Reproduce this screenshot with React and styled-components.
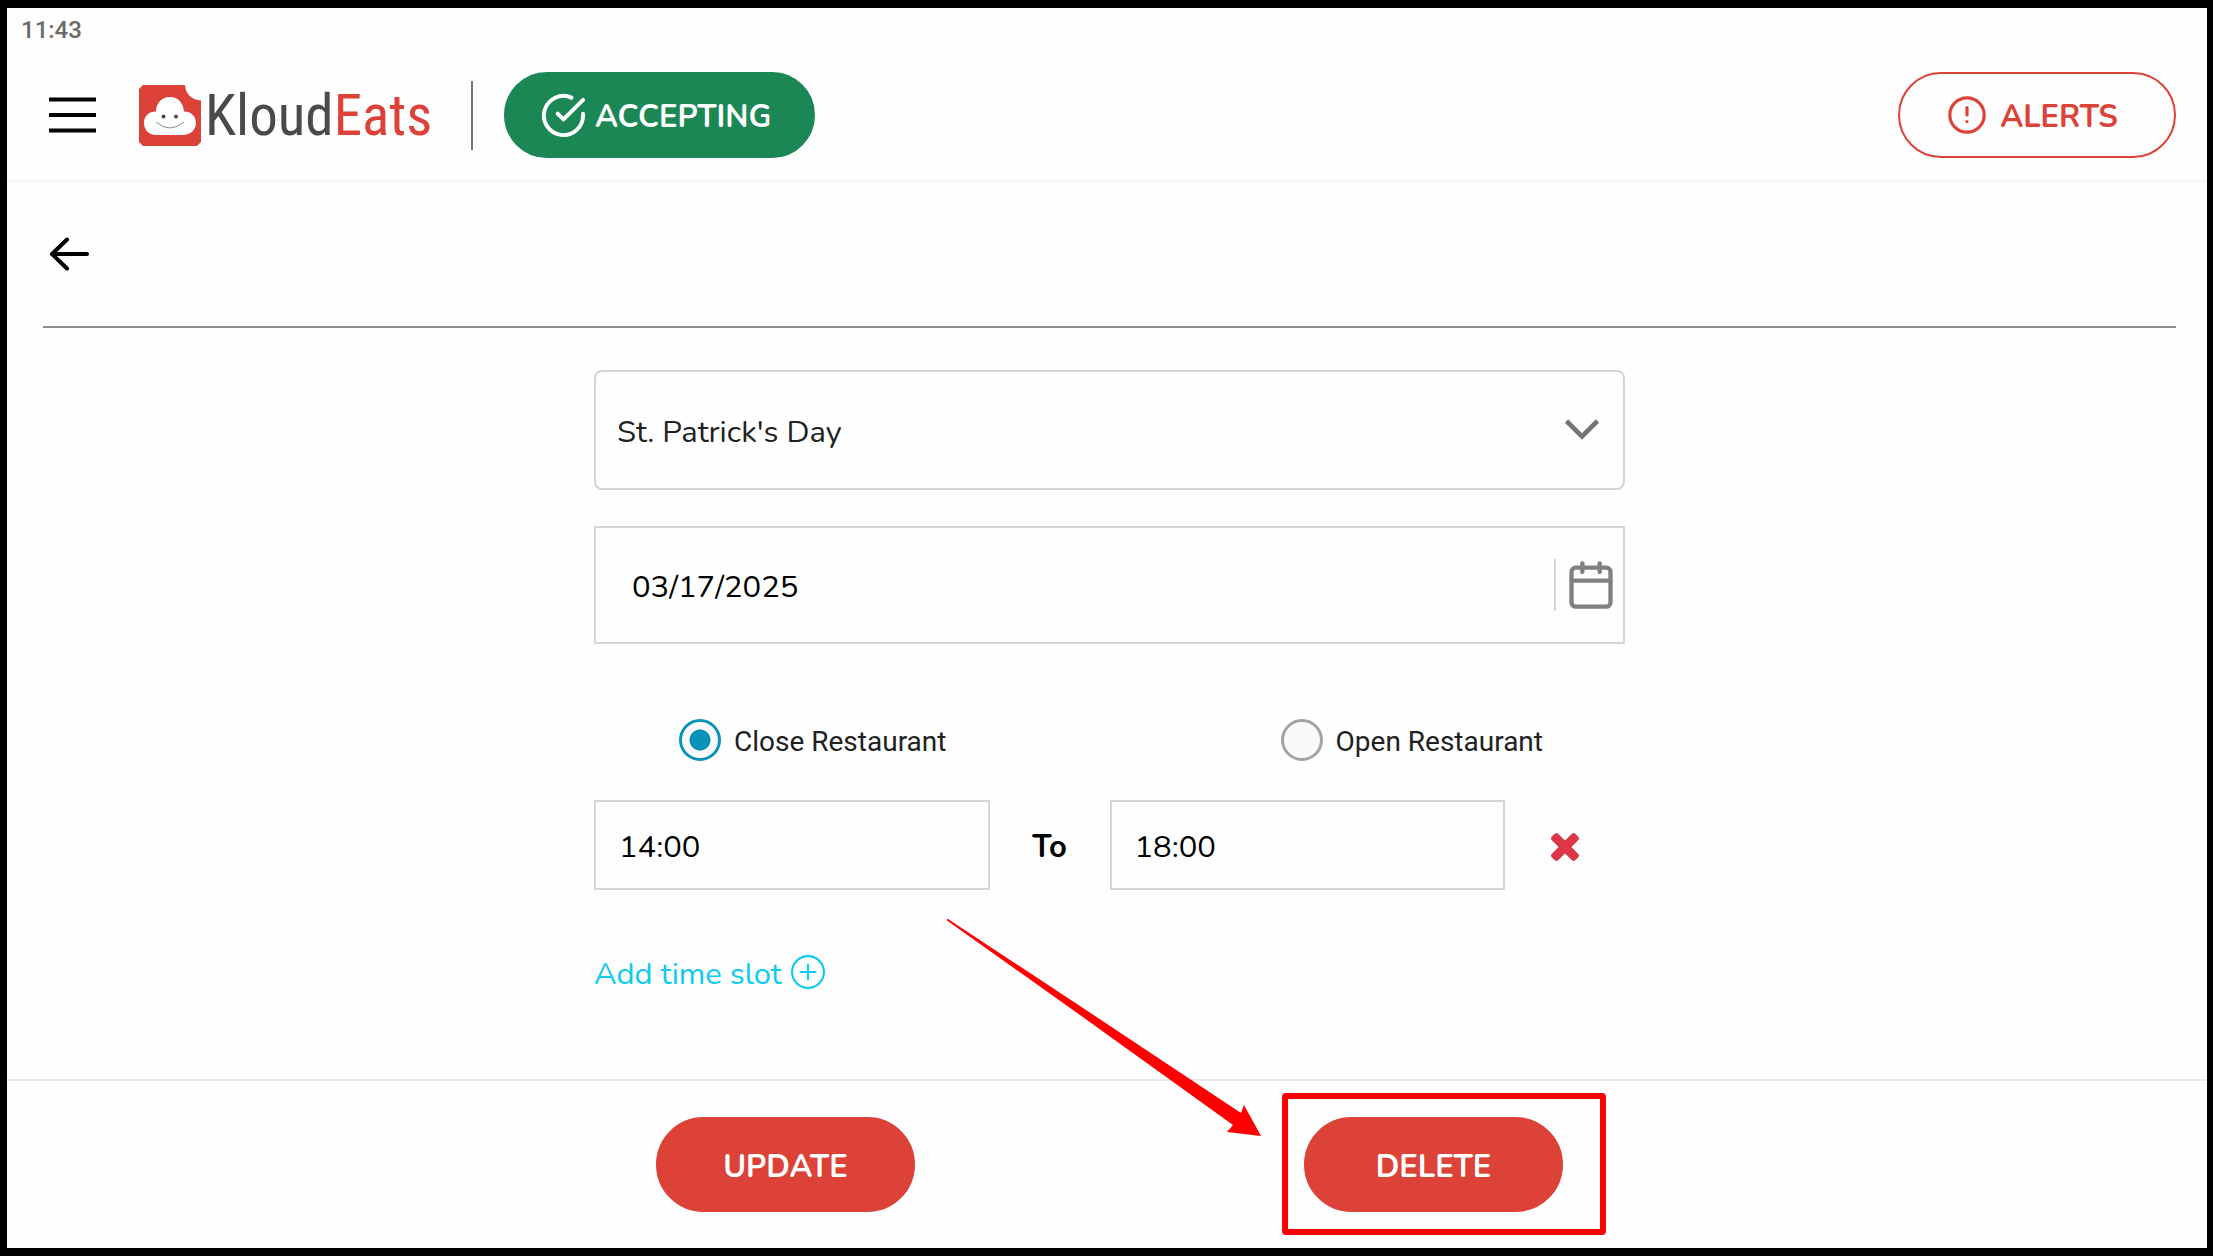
import React, { useState } from "react";
import styled, { createGlobalStyle } from "styled-components";
import { BsPlusCircle } from "react-icons/bs";
import { Calendar } from "lucide-react";

const colors = {
  page: "#fefefe",
  red: "#dc4238",
  green: "#1a8754",
  cyan: "#0dcaf0",
  danger: "#dc3545",
  radio: "#0a92b7",
  border: "#d4d4d4",
  gray: "#808080",
  marker: "#ff0000",
};

const GlobalStyle = createGlobalStyle`
  * {
    box-sizing: border-box;
  }

  body {
    margin: 0;
    background: #000;
    font-family: Nunito, Lato, "Open Sans", sans-serif;
    font-size: 31px;
    color: #000;
  }

  button, input, select {
    font: inherit;
    color: inherit;
    margin: 0;
  }
`;

// Device frame around the whole screen
const Screen = styled.div`
  min-height: 100vh;
  display: flex;
  flex-direction: column;
  border: solid #000;
  border-width: 8px 6px 8px 7px;
  background: ${colors.page};
`;

const StatusBar = styled.div`
  height: 44px;
  padding: 0 14px;
  display: flex;
  align-items: center;
  font-family: Roboto, sans-serif;
  font-size: 24px;
  font-weight: 500;
  color: #6a6a6a;
`;

const Header = styled.header`
  display: flex;
  align-items: center;
  padding: 20px 31px 22px 42px;
  border-bottom: 2px solid #f5f5f5;
`;

const IconButton = styled.button`
  display: flex;
  align-items: center;
  justify-content: center;
  padding: 0;
  border: none;
  background: none;
  cursor: pointer;
`;

const Logo = styled.a`
  display: flex;
  align-items: center;
  gap: 4px;
  margin-left: 43px;
  font-family: "Roboto Condensed", "Liberation Sans Narrow", Roboto, sans-serif;
  font-size: 57px;
  line-height: 64px;
  color: #4a4a4a;
  text-decoration: none;

  span {
    padding-top: 2px;
  }

  strong {
    font-weight: inherit;
    color: ${colors.red};
  }
`;

const Divider = styled.span`
  width: 2px;
  height: 69px;
  margin: 0 31px 0 39px;
  background: #6c757d;
`;

const Pill = styled.button`
  display: flex;
  align-items: center;
  justify-content: center;
  gap: ${(props) => props.$gap || "0"};
  width: ${(props) => props.$width};
  height: ${(props) => props.$height || "86px"};
  padding: 0 ${(props) => (props.$gap ? "8px" : "0")} 0 0;
  border: 2px solid ${(props) => props.$color};
  border-radius: 48px;
  background: ${(props) => (props.$outline ? "transparent" : props.$color)};
  color: ${(props) => (props.$outline ? props.$color : "#fff")};
  font-weight: 700;
  cursor: pointer;

  span {
    padding-top: 4px;
  }
`;

const Spacer = styled.div`
  flex: 1;
`;

const Main = styled.main`
  flex: 1;
  padding: 0 31px 0 36px;
`;

const BackBar = styled.div`
  display: flex;
  align-items: center;
  height: 146px;
  padding-left: 6px;
  border-bottom: 2px solid #8c8c8c;
`;

const Form = styled.form`
  width: 100%;
  max-width: 1031px;
  margin: 0 auto;
  padding-top: 42px;
`;

const SelectBox = styled.div`
  position: relative;
  margin-bottom: 36px;

  select {
    width: 100%;
    height: 120px;
    padding: 3px 21px 0;
    appearance: none;
    border: 2px solid ${colors.border};
    border-radius: 8px;
    background: transparent;
    color: #212121;
  }

  svg {
    position: absolute;
    right: 25px;
    top: 48px;
    pointer-events: none;
  }
`;

const DateBox = styled.div`
  display: flex;
  align-items: center;
  height: 118px;
  padding-right: 6px;
  border: 2px solid ${colors.border};

  input {
    flex: 1;
    min-width: 0;
    padding: 3px 36px 0;
    border: none;
    outline: none;
    background: transparent;
  }

  button {
    height: 52px;
    padding-left: 9px;
    border-left: 2px solid ${colors.border};
    color: ${colors.gray};
  }
`;

const RadioRow = styled.div`
  display: flex;
  justify-content: space-between;
  padding: 0 82px 0 85px;
  margin: 75px 0 39px;
`;

const RadioLabel = styled.label`
  display: flex;
  align-items: center;
  gap: 13px;
  font-family: Roboto, sans-serif;
  font-size: 28px;
  color: #212121;

  input {
    width: 42px;
    height: 42px;
    appearance: none;
    border: 3px solid #a3a3a3;
    border-radius: 50%;
    background: #fafafa;
  }

  input:checked {
    border-color: ${colors.radio};
    background: radial-gradient(circle, ${colors.radio} 10px, #fafafa 11px);
  }

  span {
    padding-top: 2px;
  }
`;

const TimeRow = styled.div`
  display: grid;
  grid-template-columns: 1fr 120px 1fr 120px;
  align-items: center;

  input {
    width: 100%;
    height: 90px;
    padding: 3px 23px 0;
    border: 2px solid ${colors.border};
    background: transparent;
  }

  span {
    padding-top: 3px;
    text-align: center;
    font-weight: 700;
  }

  button {
    padding-top: 3px;
    color: ${colors.danger};
  }
`;

const AddSlot = styled(IconButton)`
  gap: 9px;
  margin: 60px 0 40px;
  line-height: 40px;
  color: ${colors.cyan};

  span {
    padding-top: 4px;
  }
`;

const Footer = styled.footer`
  padding: 36px 31px 36px 36px;
  border-top: 2px solid #e8e8e8;
`;

const Actions = styled.div`
  display: flex;
  justify-content: space-between;
  width: 100%;
  max-width: 1031px;
  margin: 0 auto;
  padding: 0 62px;
`;

const Highlighted = styled.div`
  position: relative;
`;

// Red frame drawn over the highlighted button
const Marker = styled.span`
  position: absolute;
  inset: -24px -43px -23px -22px;
  border: 6px solid ${colors.marker};
  border-radius: 4px;
  pointer-events: none;
`;

const Pointer = styled.svg`
  position: absolute;
  right: calc(100% + 43px);
  top: -198px;
  pointer-events: none;
`;

const MenuIcon = () => (
  <svg width="47" height="36" viewBox="0 0 47 36" stroke="#000" strokeWidth="4">
    <path d="M0 2.500H47M0 18H47M0 33.500H47" />
  </svg>
);

const LogoMark = () => (
  <svg width="62" height="61" viewBox="0 0 62 61">
    <path
      d="M4 0H46C46.500 9 53 15 62 15.500V57L58 61H4L0 57V4Z"
      fill={colors.red}
    />
    <path
      d="M17 26.500C17 18 23 12 31 12S44.500 18 45 26.500C52 26.500 57 31 57 38S51 50 44 50H17C10 50 5 45 5 38S10 26.500 17 26.500Z"
      fill="#fff"
    />
    <circle cx="24.500" cy="31.500" r="2" fill="#4a4a4a" />
    <circle cx="37" cy="31.500" r="2" fill="#4a4a4a" />
    <path d="M17 37Q31 49 45 37" fill="none" stroke="#8a8a8a" />
  </svg>
);

const CheckIcon = () => (
  <svg
    width="47"
    height="47"
    viewBox="0 0 24 24"
    fill="none"
    stroke="currentColor"
    strokeWidth="2"
    strokeLinecap="round"
    strokeLinejoin="round"
  >
    <path d="M22 11.080V12a10 10 0 1 1-5.930-9.140" />
    <path d="M22 4 12 14.010l-3-3" />
  </svg>
);

const AlertIcon = () => (
  <svg
    width="38"
    height="38"
    viewBox="0 0 38 38"
    fill="none"
    stroke="currentColor"
    strokeWidth="3.200"
    strokeLinecap="round"
  >
    <circle cx="19" cy="19" r="17.200" />
    <path d="M19 11.500V19M19 25.500V25.600" />
  </svg>
);

const BackIcon = () => (
  <svg
    width="42"
    height="36"
    viewBox="0 0 42 36"
    fill="none"
    stroke="#000"
    strokeWidth="4"
    strokeLinecap="round"
    strokeLinejoin="round"
  >
    <path d="M38 18H3M18 3.500 3 18 18 32.500" />
  </svg>
);

const ChevronIcon = () => (
  <svg width="36" height="24" viewBox="0 0 36 24" fill="none" stroke="#757575" strokeWidth="4.600">
    <path d="M2.500 3 18 18.500 33.500 3" />
  </svg>
);

const RemoveIcon = () => (
  <svg width="28" height="28" viewBox="110 366 1188 1188" fill="currentColor">
    <path d="M1298 1322q0 40-28 68l-136 136q-28 28-68 28t-68-28l-294-294-294 294q-28 28-68 28t-68-28l-136-136q-28-28-28-68t28-68l294-294-294-294q-28-28-28-68t28-68l136-136q28-28 68-28t68 28l294 294 294-294q28-28 68-28t68 28l136 136q28 28 28 68t-28 68l-294 294 294 294q28 28 28 68z" />
  </svg>
);

const App = () => {
  const [status, setStatus] = useState("close");
  const [date, setDate] = useState("03/17/2025");
  const [from, setFrom] = useState("14:00");
  const [to, setTo] = useState("18:00");

  return (
    <Screen>
      <GlobalStyle />
      <StatusBar>11:43</StatusBar>
      <Header>
        <IconButton aria-label="Menu">
          <MenuIcon />
        </IconButton>
        <Logo href="#">
          <LogoMark />
          <span>
            Kloud<strong>Eats</strong>
          </span>
        </Logo>
        <Divider />
        <Pill $color={colors.green} $width="311px" $gap="8px">
          <CheckIcon />
          <span>ACCEPTING</span>
        </Pill>
        <Spacer />
        <Pill $color={colors.red} $width="278px" $gap="14px" $outline>
          <AlertIcon />
          <span>ALERTS</span>
        </Pill>
      </Header>

      <Main>
        <BackBar>
          <IconButton aria-label="Back">
            <BackIcon />
          </IconButton>
        </BackBar>

        <Form>
          <SelectBox>
            <select aria-label="Holiday" defaultValue="patrick">
              <option value="patrick">St. Patrick's Day</option>
            </select>
            <ChevronIcon />
          </SelectBox>

          <DateBox>
            <input
              aria-label="Date"
              value={date}
              onChange={(e) => setDate(e.target.value)}
            />
            <IconButton type="button" aria-label="Pick a date">
              <Calendar size={52} />
            </IconButton>
          </DateBox>

          <RadioRow>
            <RadioLabel>
              <input
                type="radio"
                name="status"
                checked={status === "close"}
                onChange={() => setStatus("close")}
              />
              <span>Close Restaurant</span>
            </RadioLabel>
            <RadioLabel>
              <input
                type="radio"
                name="status"
                checked={status === "open"}
                onChange={() => setStatus("open")}
              />
              <span>Open Restaurant</span>
            </RadioLabel>
          </RadioRow>

          <TimeRow>
            <input
              aria-label="From"
              value={from}
              onChange={(e) => setFrom(e.target.value)}
            />
            <span>To</span>
            <input
              aria-label="To"
              value={to}
              onChange={(e) => setTo(e.target.value)}
            />
            <IconButton type="button" aria-label="Remove time slot">
              <RemoveIcon />
            </IconButton>
          </TimeRow>

          <AddSlot type="button">
            <span>Add time slot</span>
            <BsPlusCircle size={34} />
          </AddSlot>
        </Form>
      </Main>

      <Footer>
        <Actions>
          <Pill $color={colors.red} $width="259px" $height="95px">
            <span>UPDATE</span>
          </Pill>
          <Highlighted>
            <Pill $color={colors.red} $width="259px" $height="95px">
              <span>DELETE</span>
            </Pill>
            <Marker />
            <Pointer width="314" height="217" viewBox="0 0 314 217">
              <path
                d="M0 0 1 0 133 87 294 194 297 186 314 217 280 213 286 206 133 96 0 1.500Z"
                fill={colors.marker}
              />
            </Pointer>
          </Highlighted>
        </Actions>
      </Footer>
    </Screen>
  );
};

export default App;
